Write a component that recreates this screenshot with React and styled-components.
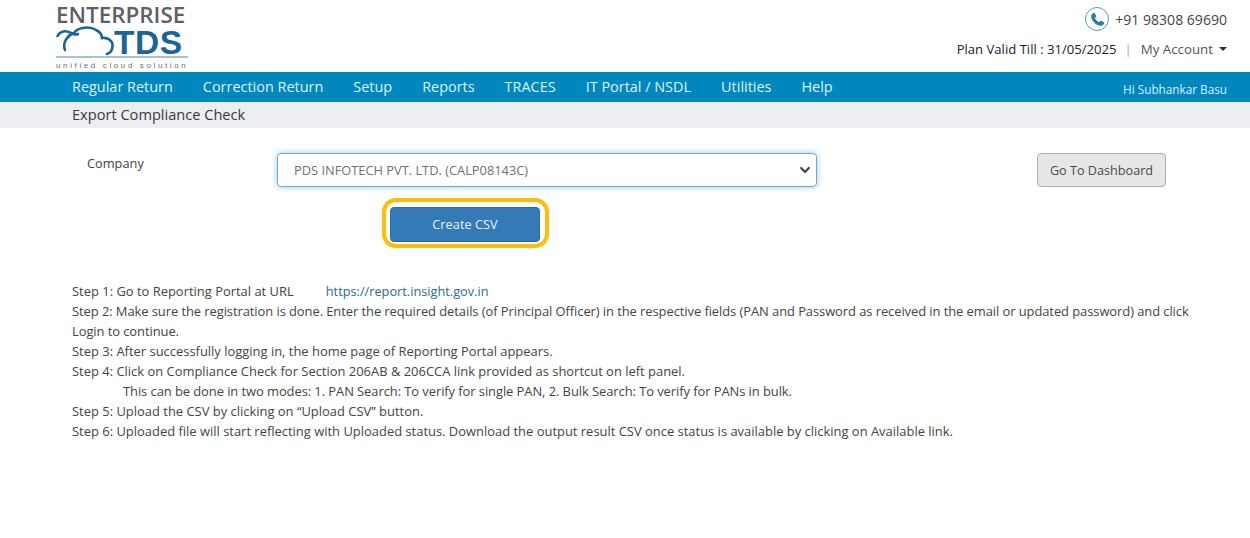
import React from "react";
import styled, { createGlobalStyle } from "styled-components";

const GlobalStyle = createGlobalStyle`
  html, body {
    margin: 0;
    padding: 0;
    background: #fff;
    font-family: "Open Sans", "Noto Sans", sans-serif;
    color: #333;
  }
`;

const Page = styled.div`
  width: 1250px;
  height: 538px;
  overflow: hidden;
`;

const Header = styled.header`
  height: 72px;
  display: flex;
  justify-content: space-between;
  padding: 0 23px 0 56px;
`;

const Logo = styled.div`
  width: 132px;
  display: flex;
  flex-direction: column;
  padding-top: 5px;
`;

const LogoTop = styled.div`
  font: 600 22.4px/20px "Open Sans", sans-serif;
  color: #5d6064;
  white-space: nowrap;
`;

const LogoMark = styled.div`
  display: flex;
  align-items: flex-end;
  height: 34px;
  margin: -3px 0 0 -2px;
`;

const LogoTds = styled.div`
  font: 700 33.5px/27px "Liberation Sans", sans-serif;
  color: #1a6496;
  letter-spacing: 0.5px;
`;

const LogoRule = styled.div`
  height: 2px;
  background: #a9c1ce;
`;

const LogoTag = styled.div`
  font: 400 8px/9px "Liberation Sans", sans-serif;
  color: #6b6f73;
  letter-spacing: 2.62px;
  white-space: nowrap;
  margin-top: 3px;
`;

const HeaderRight = styled.div`
  display: flex;
  flex-direction: column;
  align-items: flex-end;
  padding-top: 7px;
`;

const Phone = styled.div`
  display: flex;
  align-items: center;
  gap: 6px;
  height: 24px;
  font-size: 14.05px;
  color: #444;
`;

const PhoneBadge = styled.span`
  width: 24px;
  height: 24px;
  border: 1px solid #4a9fb8;
  border-radius: 50%;
  display: flex;
  align-items: center;
  justify-content: center;
  box-sizing: border-box;
`;

const AccountRow = styled.div`
  display: flex;
  align-items: center;
  height: 20px;
  margin-top: 8px;
  font-size: 13.1px;
`;

const Plan = styled.span`
  color: #222;
`;

const Divider = styled.span`
  color: #aaa;
  margin: 0 9px 0 8px;
`;

const Account = styled.span`
  color: #555;
  font-size: 13.3px;
`;

const Caret = styled.span`
  width: 0;
  height: 0;
  margin-left: 6px;
  border-left: 4px solid transparent;
  border-right: 4px solid transparent;
  border-top: 4px solid #333;
`;

const Nav = styled.nav`
  height: 30px;
  background: #0087bd;
  display: flex;
  align-items: center;
  justify-content: space-between;
  padding: 0 23px 0 72px;
`;

const NavList = styled.div`
  display: flex;
  gap: 30px;
  padding-bottom: 2px;
`;

const NavItem = styled.a`
  color: #dff3fb;
  font-size: 14.45px;
  white-space: nowrap;
`;

const Greeting = styled.span`
  color: #d5f1fb;
  font-size: 11.75px;
  padding-top: 4px;
`;

const SubBar = styled.div`
  height: 26px;
  box-sizing: border-box;
  background: #eceef1;
  display: flex;
  align-items: center;
  padding: 0 0 2px 72px;
  font-size: 14.6px;
  color: #3a3a3a;
`;

const Content = styled.main`
  padding: 25px 84px 0 87px;
`;

const FormRow = styled.div`
  display: flex;
  align-items: flex-start;
`;

const Label = styled.label`
  width: 190px;
  font-size: 12.8px;
  line-height: 20px;
  color: #444;
`;

const SelectBox = styled.div`
  width: 540px;
  height: 34px;
  box-sizing: border-box;
  border: 1px solid #7aa6c8;
  border-radius: 4px;
  box-shadow: 0 0 6px rgba(102, 175, 233, 0.7);
  display: flex;
  align-items: center;
  justify-content: space-between;
  padding: 0 5px 0 16px;
  font-size: 12.84px;
  color: #707070;
  background: #fff;
`;

const DashboardButton = styled.button`
  margin-left: auto;
  width: 129px;
  height: 34px;
  background: #e6e6e6;
  border: 1px solid #adadad;
  border-radius: 4px;
  font: 12.65px "Open Sans", sans-serif;
  color: #4a4a4a;
  padding: 0;
`;

const CreateRow = styled.div`
  display: flex;
  padding: 11px 0 0 295px;
`;

const CreateRing = styled.div`
  width: 167px;
  height: 50px;
  box-sizing: border-box;
  border: 4px solid #fdbd0d;
  border-radius: 14px;
  padding: 5px 5px 2px 4px;
`;

const CreateButton = styled.button`
  width: 100%;
  height: 100%;
  display: block;
  background: #337ab7;
  border: 1px solid #2e6da4;
  border-radius: 4px;
  color: #e8f2fa;
  font: 12.8px/30px "Open Sans", sans-serif;
  padding: 0 0 2px;
`;

const Steps = styled.div`
  margin: 33px 0 0 -15px;
  width: 1125px;
  font-size: 12.95px;
  line-height: 20px;
  color: #444;
`;

const Step = styled.div`
  padding-left: ${(props) => (props.$indent ? "51px" : "0")};
  letter-spacing: ${(props) => (props.$tight ? "-0.07px" : "0")};
`;

const PortalLink = styled.a`
  color: #2c6a8f;
  margin-left: 32px;
  font-size: 12.75px;
  font-weight: 500;
`;

const navItems = [
  "Regular Return",
  "Correction Return",
  "Setup",
  "Reports",
  "TRACES",
  "IT Portal / NSDL",
  "Utilities",
  "Help",
];

const CloudIcon = () => (
  <svg width="60" height="34" viewBox="0 0 60 34" fill="none" stroke="#1a6496" strokeWidth="2.6" strokeLinecap="round">
    <path d="M3.500 14 C6 9 12 8 17 11 C19 12 22 13 24 12" />
    <path d="M11 28 C8 20 14 13 20 11 C24 5 36 4 42 8 C46 10 48 13 48 16 C54 15 59 19 58.500 24 C58.500 28 56 31 53 32" />
  </svg>
);

const PhoneGlyph = () => (
  <svg width="17" height="17" viewBox="0 0 24 24" fill="#2f7f9f">
    <path d="M6.600 2.500 C5.200 3 3 4.800 3 7.500 C3 13.500 10.500 21 16.500 21 C19.200 21 21 18.800 21.500 17.400 C21.700 16.800 21.500 16.300 21 16 L17.200 13.800 C16.700 13.500 16.200 13.600 15.800 14 L14.200 15.700 C11.800 14.600 9.400 12.200 8.300 9.800 L10 8.200 C10.400 7.800 10.500 7.300 10.200 6.800 L8 3 C7.700 2.500 7.200 2.300 6.600 2.500 Z" />
  </svg>
);

const Chevron = () => (
  <svg width="12" height="12" viewBox="0 0 12 12" fill="none" stroke="#444" strokeWidth="2.200" strokeLinecap="round" strokeLinejoin="round">
    <path d="M2.200 4 L6 8 L9.800 4" />
  </svg>
);

export default function App() {
  return (
    <Page>
      <GlobalStyle />
      <Header>
        <Logo>
          <LogoTop>ENTERPRISE</LogoTop>
          <LogoMark>
            <CloudIcon />
            <LogoTds>TDS</LogoTds>
          </LogoMark>
          <LogoRule />
          <LogoTag>unified cloud solution</LogoTag>
        </Logo>
        <HeaderRight>
          <Phone>
            <PhoneBadge>
              <PhoneGlyph />
            </PhoneBadge>
            +91 98308 69690
          </Phone>
          <AccountRow>
            <Plan>Plan Valid Till : 31/05/2025</Plan>
            <Divider>|</Divider>
            <Account>My Account</Account>
            <Caret />
          </AccountRow>
        </HeaderRight>
      </Header>
      <Nav>
        <NavList>
          {navItems.map((item) => (
            <NavItem key={item}>{item}</NavItem>
          ))}
        </NavList>
        <Greeting>Hi Subhankar Basu</Greeting>
      </Nav>
      <SubBar>Export Compliance Check</SubBar>
      <Content>
        <FormRow>
          <Label>Company</Label>
          <SelectBox>
            PDS INFOTECH PVT. LTD. (CALP08143C)
            <Chevron />
          </SelectBox>
          <DashboardButton>Go To Dashboard</DashboardButton>
        </FormRow>
        <CreateRow>
          <CreateRing>
            <CreateButton>Create CSV</CreateButton>
          </CreateRing>
        </CreateRow>
        <Steps>
          <Step>
            Step 1: Go to Reporting Portal at URL
            <PortalLink>https://report.insight.gov.in</PortalLink>
          </Step>
          <Step $tight>
            Step 2: Make sure the registration is done. Enter the required details (of Principal Officer) in the respective fields (PAN and Password as received in the email or updated password) and click Login to continue.
          </Step>
          <Step>Step 3: After successfully logging in, the home page of Reporting Portal appears.</Step>
          <Step>Step 4: Click on Compliance Check for Section 206AB &amp; 206CCA link provided as shortcut on left panel.</Step>
          <Step $indent $tight>This can be done in two modes: 1. PAN Search: To verify for single PAN, 2. Bulk Search: To verify for PANs in bulk.</Step>
          <Step>Step 5: Upload the CSV by clicking on “Upload CSV” button.</Step>
          <Step>Step 6: Uploaded file will start reflecting with Uploaded status. Download the output result CSV once status is available by clicking on Available link.</Step>
        </Steps>
      </Content>
    </Page>
  );
}
